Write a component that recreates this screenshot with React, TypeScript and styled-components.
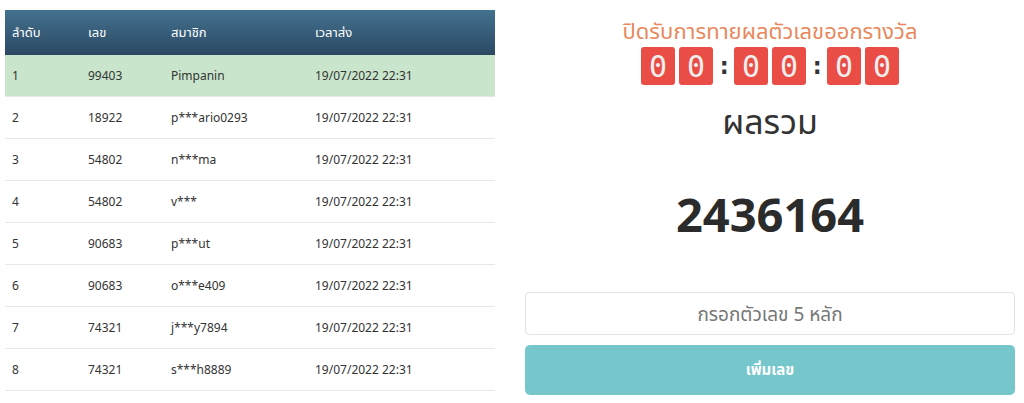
import React, { useState } from "react";
import styled, { createGlobalStyle } from "styled-components";

interface Entry {
  id: number;
  number: string;
  member: string;
  sentAt: string;
}

const entries: Entry[] = [
  { id: 1, number: "99403", member: "Pimpanin", sentAt: "19/07/2022 22:31" },
  { id: 2, number: "18922", member: "p***ario0293", sentAt: "19/07/2022 22:31" },
  { id: 3, number: "54802", member: "n***ma", sentAt: "19/07/2022 22:31" },
  { id: 4, number: "54802", member: "v***", sentAt: "19/07/2022 22:31" },
  { id: 5, number: "90683", member: "p***ut", sentAt: "19/07/2022 22:31" },
  { id: 6, number: "90683", member: "o***e409", sentAt: "19/07/2022 22:31" },
  { id: 7, number: "74321", member: "j***y7894", sentAt: "19/07/2022 22:31" },
  { id: 8, number: "74321", member: "s***h8889", sentAt: "19/07/2022 22:31" },
];

const GlobalStyle = createGlobalStyle`
  body {
    margin: 0;
    background: #fff;
    font-family: "Noto Sans", "Noto Sans Thai", "DejaVu Sans", sans-serif;
    color: #333;
  }
`;

const Page = styled.div`
  display: flex;
  align-items: flex-start;
  gap: 30px;
  padding: 10px 9px 0 5px;
`;

const Table = styled.table`
  width: 490px;
  flex: none;
  border-collapse: collapse;
  font-size: 12px;
`;

const HeadRow = styled.tr`
  background: linear-gradient(#43728f, #2b4863);
`;

const HeadCell = styled.th<{ $w?: number }>`
  width: ${(p) => (p.$w ? `${p.$w}px` : "auto")};
  height: 45px;
  padding: 0 0 0 7px;
  text-align: left;
  font-weight: normal;
  font-size: 13px;
  color: #fff;
`;

const Row = styled.tr<{ $win?: boolean }>`
  background: ${(p) => (p.$win ? "#c9e6cc" : "#fff")};
  border-bottom: 1px solid #e8e8e8;
`;

const Cell = styled.td`
  height: 41px;
  padding: 0 0 0 7px;
  line-height: 16px;
  color: #333;
`;

const Side = styled.div`
  flex: 1;
  display: flex;
  flex-direction: column;
  align-items: center;
`;

const Notice = styled.div`
  margin-top: 6px;
  font-size: 22px;
  line-height: 28px;
  color: #e8895d;
`;

const Timer = styled.div`
  display: flex;
  align-items: center;
  gap: 4px;
  margin-top: 3px;
`;

const Digit = styled.span`
  width: 34px;
  height: 38px;
  display: flex;
  align-items: center;
  justify-content: center;
  background: #e94d45;
  border-radius: 3px;
  color: #eee;
  font-family: "DejaVu Sans Mono", monospace;
  font-size: 30px;
`;

const Colon = styled.span`
  width: 13px;
  text-align: center;
  font-family: "DejaVu Sans Mono", monospace;
  font-size: 24px;
  font-weight: bold;
  color: #333;
`;

const SumLabel = styled.div`
  margin-top: 14px;
  font-size: 34px;
  line-height: 44px;
  color: #333;
`;

const SumValue = styled.div`
  margin-top: 41px;
  font-size: 47px;
  line-height: 60px;
  font-weight: bold;
  color: #2b2b2b;
`;

const Input = styled.input`
  box-sizing: border-box;
  width: 100%;
  height: 43px;
  margin-top: 48px;
  border: 1px solid #e2e2e2;
  border-radius: 4px;
  text-align: center;
  font-family: inherit;
  font-size: 19px;
  color: #333;
  outline: none;
  &::placeholder {
    color: #777;
  }
`;

const AddButton = styled.button`
  width: 100%;
  height: 50px;
  margin-top: 10px;
  border: none;
  border-radius: 5px;
  background: #76c7cb;
  color: #fff;
  font-family: inherit;
  font-size: 15px;
  font-weight: bold;
  cursor: pointer;
`;

const App: React.FC = () => {
  const [value, setValue] = useState("");
  const time = ["00", "00", "00"];

  return (
    <>
      <GlobalStyle />
      <Page>
        <Table>
          <thead>
            <HeadRow>
              <HeadCell $w={69}>ลำดับ</HeadCell>
              <HeadCell $w={76}>เลข</HeadCell>
              <HeadCell $w={137}>สมาชิก</HeadCell>
              <HeadCell>เวลาส่ง</HeadCell>
            </HeadRow>
          </thead>
          <tbody>
            {entries.map((e) => (
              <Row key={e.id} $win={e.id === 1}>
                <Cell>{e.id}</Cell>
                <Cell>{e.number}</Cell>
                <Cell>{e.member}</Cell>
                <Cell>{e.sentAt}</Cell>
              </Row>
            ))}
          </tbody>
        </Table>
        <Side>
          <Notice>ปิดรับการทายผลตัวเลขออกรางวัล</Notice>
          <Timer>
            {time.map((part, i) => (
              <React.Fragment key={i}>
                {i > 0 && <Colon>:</Colon>}
                {part.split("").map((d, j) => (
                  <Digit key={j}>{d}</Digit>
                ))}
              </React.Fragment>
            ))}
          </Timer>
          <SumLabel>ผลรวม</SumLabel>
          <SumValue>2436164</SumValue>
          <Input
            placeholder="กรอกตัวเลข 5 หลัก"
            value={value}
            onChange={(ev) => setValue(ev.target.value)}
          />
          <AddButton type="button">เพิ่มเลข</AddButton>
        </Side>
      </Page>
    </>
  );
};

export default App;
